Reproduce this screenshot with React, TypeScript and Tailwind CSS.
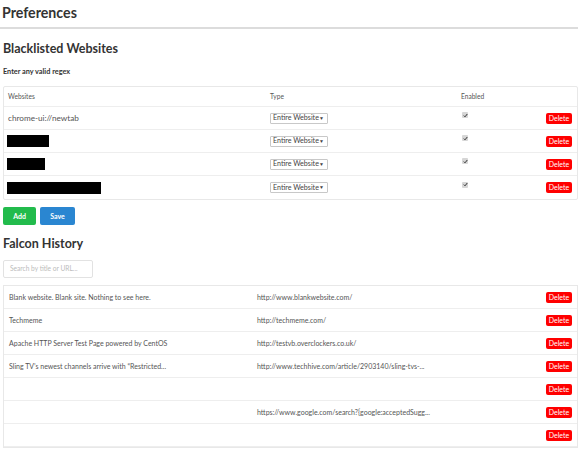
const font = { fontFamily: 'Lato, "Open Sans", sans-serif' };

function DeleteBtn() {
  return (
    <span className="flex h-[11px] w-[26px] items-center justify-center rounded-[2px] bg-[#ff0000] text-[7px] leading-none whitespace-nowrap text-white">
      Delete
    </span>
  );
}

function TypeSelect() {
  return (
    <span className="flex h-[11px] w-[58px] items-center justify-between rounded-[1px] border border-[#c8c8c8] bg-white pr-[3px] pl-[2px] text-[7.1px] leading-none whitespace-nowrap text-[#444]">
      Entire Website
      <span className="text-[5px]">▼</span>
    </span>
  );
}

function Check() {
  return (
    <span className="flex h-[6px] w-[6px] items-center justify-center rounded-[1px] bg-[#d6d6d6]">
      <svg width="5" height="5" viewBox="0 0 5 5">
        <path d="M0.8 2.6 L2 3.8 L4.3 1" fill="none" stroke="#333" strokeWidth="1" />
      </svg>
    </span>
  );
}

const blacklist = [
  { site: 'chrome-ui://newtab', redact: 0 },
  { site: '', redact: 42 },
  { site: '', redact: 38 },
  { site: '', redact: 94 },
];

const history = [
  ['Blank website. Blank site. Nothing to see here.', 'http://www.blankwebsite.com/'],
  ['Techmeme', 'http://techmeme.com/'],
  ['Apache HTTP Server Test Page powered by CentOS', 'http://testvb.overclockers.co.uk/'],
  ['Sling TV\u2019s newest channels arrive with \u201cRestricted...', 'http://www.techhive.com/article/2903140/sling-tvs-...'],
  ['', ''],
  ['', 'https://www.google.com/search?{google:acceptedSugg...'],
  ['', ''],
];

export default function App() {
  return (
    <div className="h-[452px] w-[580px] overflow-hidden bg-white text-[#555]" style={font}>
      <h1 className="pl-[2px] pt-[3px] text-[14.2px] font-bold leading-[20px] text-[#333]">Preferences</h1>
      <div className="mt-[4px] h-[2px] w-[578px] bg-[#dcdcdc]" />

      <h2 className="mt-[12px] pl-[3px] text-[12.5px] font-bold leading-[16px] text-[#333]">Blacklisted Websites</h2>
      <p className="mt-[10px] pl-[3px] text-[7.3px] font-bold leading-[10px] text-[#333]">Enter any valid regex</p>

      <div className="ml-[3px] mt-[9px] w-[575px] rounded-[2px] border border-[#e8e8e8]">
        <div className="flex h-[20px] items-center border-b border-[#eee] text-[6.6px] text-[#555]">
          <span className="w-[266px] pl-[4px]">Websites</span>
          <span className="w-[191px]">Type</span>
          <span className="text-[#555]">Enabled</span>
        </div>
        {blacklist.map((r, i) => (
          <div
            key={i}
            className={`flex h-[23px] items-center text-[8.2px] ${i < blacklist.length - 1 ? 'border-b border-[#eee]' : ''}`}
          >
            <span className="flex w-[266px] items-center pl-[3px]">
              {r.redact ? (
                <span className="h-[12px] bg-black" style={{ width: r.redact }} />
              ) : (
                <span className="pl-[1px]">{r.site}</span>
              )}
            </span>
            <span className="w-[192px]">
              <TypeSelect />
            </span>
            <span className="-mt-[6px] flex-1">
              <Check />
            </span>
            <span className="pr-[5px]">
              <DeleteBtn />
            </span>
          </div>
        ))}
      </div>

      <div className="ml-[3px] mt-[7px] flex gap-[4px]">
        <span className="flex h-[18px] w-[33px] items-center justify-center rounded-[2px] bg-[#22bb4c] text-[7px] font-bold text-white">
          Add
        </span>
        <span className="flex h-[18px] w-[35px] items-center justify-center rounded-[2px] bg-[#2a86d1] text-[7px] font-bold text-white">
          Save
        </span>
      </div>

      <h2 className="mt-[11px] pl-[3px] text-[12.5px] font-bold leading-[16px] text-[#333]">Falcon History</h2>
      <div className="ml-[3px] mt-[8px] flex h-[18px] w-[90px] items-center rounded-[2px] border border-[#e2e2e2] pl-[6px] text-[6.6px] whitespace-nowrap text-[#bbb]">
        Search by title or URL...
      </div>

      <div className="ml-[3px] mt-[7px] w-[575px] border border-[#e8e8e8]">
        {history.map((r, i) => (
          <div key={i} className="flex h-[23px] items-center border-b border-[#eee] text-[7px]">
            <span className="w-[253px] pl-[5px]">{r[0]}</span>
            <span className="flex-1">{r[1]}</span>
            <span className="pr-[5px]">
              <DeleteBtn />
            </span>
          </div>
        ))}
      </div>
    </div>
  );
}
